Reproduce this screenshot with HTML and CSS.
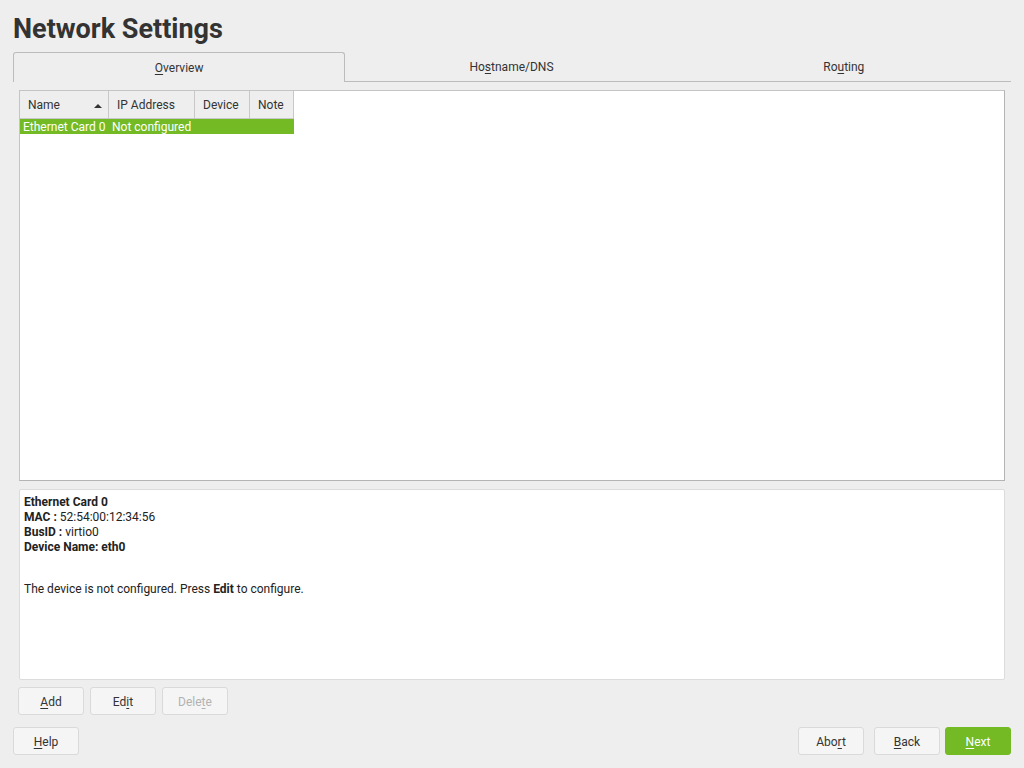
FILE: index.html
```html
<!DOCTYPE html>
<html>
<head>
<meta charset="utf-8">
<link rel="stylesheet" href="styles.css">
</head>
<body>
<div class="page">
  <h1 class="title">Network Settings</h1>
  <div class="tabs">
    <div class="tab active"><span><u>O</u>verview</span></div>
    <div class="tab"><span>Ho<u>s</u>tname/DNS</span></div>
    <div class="tab"><span>Ro<u>u</u>ting</span></div>
  </div>
  <div class="content">
    <div class="table-box">
      <div class="thead">
        <div class="th c1">Name<span class="sort"></span></div>
        <div class="th c2">IP Address</div>
        <div class="th c3">Device</div>
        <div class="th c4">Note</div>
      </div>
      <div class="row selected">
        <div class="td c1">Ethernet Card 0</div>
        <div class="td c2">Not configured</div>
        <div class="td c3"></div>
        <div class="td c4"></div>
      </div>
    </div>
    <div class="info">
      <div><b>Ethernet Card 0</b></div>
      <div><b>MAC : </b>52:54:00:12:34:56</div>
      <div><b>BusID : </b>virtio0</div>
      <div><b>Device Name: eth0</b></div>
      <div class="gap"></div>
      <div>The device is not configured. Press <b>Edit</b> to configure.</div>
    </div>
    <div class="actions">
      <button class="btn"><u>A</u>dd</button>
      <button class="btn">Ed<u>i</u>t</button>
      <button class="btn disabled">Dele<u>t</u>e</button>
    </div>
  </div>
  <div class="footer">
    <button class="btn"><u>H</u>elp</button>
    <div class="spacer"></div>
    <button class="btn">Abo<u>r</u>t</button>
    <button class="btn"><u>B</u>ack</button>
    <button class="btn primary"><u>N</u>ext</button>
  </div>
</div>
</body>
</html>
```
FILE: styles.css
```css
* { box-sizing: border-box; }
html, body { margin: 0; padding: 0; }
body {
  background: #eeeeee;
  font-family: Roboto, "Noto Sans", sans-serif;
  font-size: 12px;
  color: #333333;
  width: 1024px;
  height: 768px;
  overflow: hidden;
}
.page {
  padding: 0 13px 0 13px;
  height: 768px;
  display: flex;
  flex-direction: column;
}
.title {
  margin: 0;
  padding-top: 12px;
  height: 52px;
  font-size: 27px;
  font-weight: 700;
  color: #333;
  line-height: 34px;
}
.tabs {
  display: flex;
  height: 30px;
  border-bottom: 1px solid #bcbcbc;
}
.tab {
  flex: none;
  width: 33.3%;
  display: flex;
  align-items: center;
  justify-content: center;
  font-size: 12px;
  color: #333;
  padding-top: 1px;
}
.tab.active {
  border: 1px solid #bcbcbc;
  border-bottom: none;
  border-radius: 3px 3px 0 0;
  background: #eeeeee;
  margin-bottom: -1px;
}
u { text-decoration: underline; text-underline-offset: 2px; }
.content {
  padding: 8px 6px 0 6px;
  display: flex;
  flex-direction: column;
}
.table-box {
  height: 391px;
  background: #fff;
  border: 1px solid #c4c4c4;
  border-right-color: #b4b4b4;
  border-bottom-color: #b4b4b4;
}
.thead, .row { display: flex; }
.th {
  height: 28px;
  background: #eeeeee;
  border-right: 1px solid #c8c8c8;
  border-bottom: 1px solid #c8c8c8;
  display: flex;
  align-items: center;
  padding-left: 8px;
  position: relative;
  color: #333;
}
.c1 { width: 89px; }
.c2 { width: 86px; }
.c3 { width: 55px; }
.c4 { width: 44px; }
.sort {
  position: absolute;
  right: 6px;
  top: 13px;
  width: 0; height: 0;
  border-left: 4px solid transparent;
  border-right: 4px solid transparent;
  border-bottom: 4px solid #333;
}
.row.selected { background: #73ba25; color: #fff; width: 274px; }
.td {
  height: 15px;
  line-height: 15px;
  padding-left: 3px;
  padding-top: 1px;
  white-space: nowrap;
}
.td.c2 { padding-left: 3px; }
.info {
  margin-top: 8px;
  height: 191px;
  background: #fff;
  border: 1px solid #dcdcdc;
  border-radius: 2px;
  padding: 5px 4px 4px;
  line-height: 15px;
  color: #222;
}
.info .gap { height: 27px; }
.info b { font-weight: 700; }
.actions {
  display: flex;
  gap: 6px;
  margin-top: 7px;
  margin-left: -1px;
}
.btn {
  width: 66px;
  height: 28px;
  background: #f5f5f5;
  border: 1px solid #dadada;
  border-radius: 3px;
  font-family: Roboto, "Noto Sans", sans-serif;
  font-size: 12px;
  color: #333;
  padding: 2px 0 0;
  text-align: center;
}
.btn.disabled { color: #b2b2b2; }
.btn.primary { background: #73ba25; border-color: #73ba25; color: #fff; }
.footer {
  display: flex;
  margin-top: 12px;
  gap: 10px;
}
.footer .spacer { flex: 1; }
.footer .btn.primary { margin-left: -5px; }
```
